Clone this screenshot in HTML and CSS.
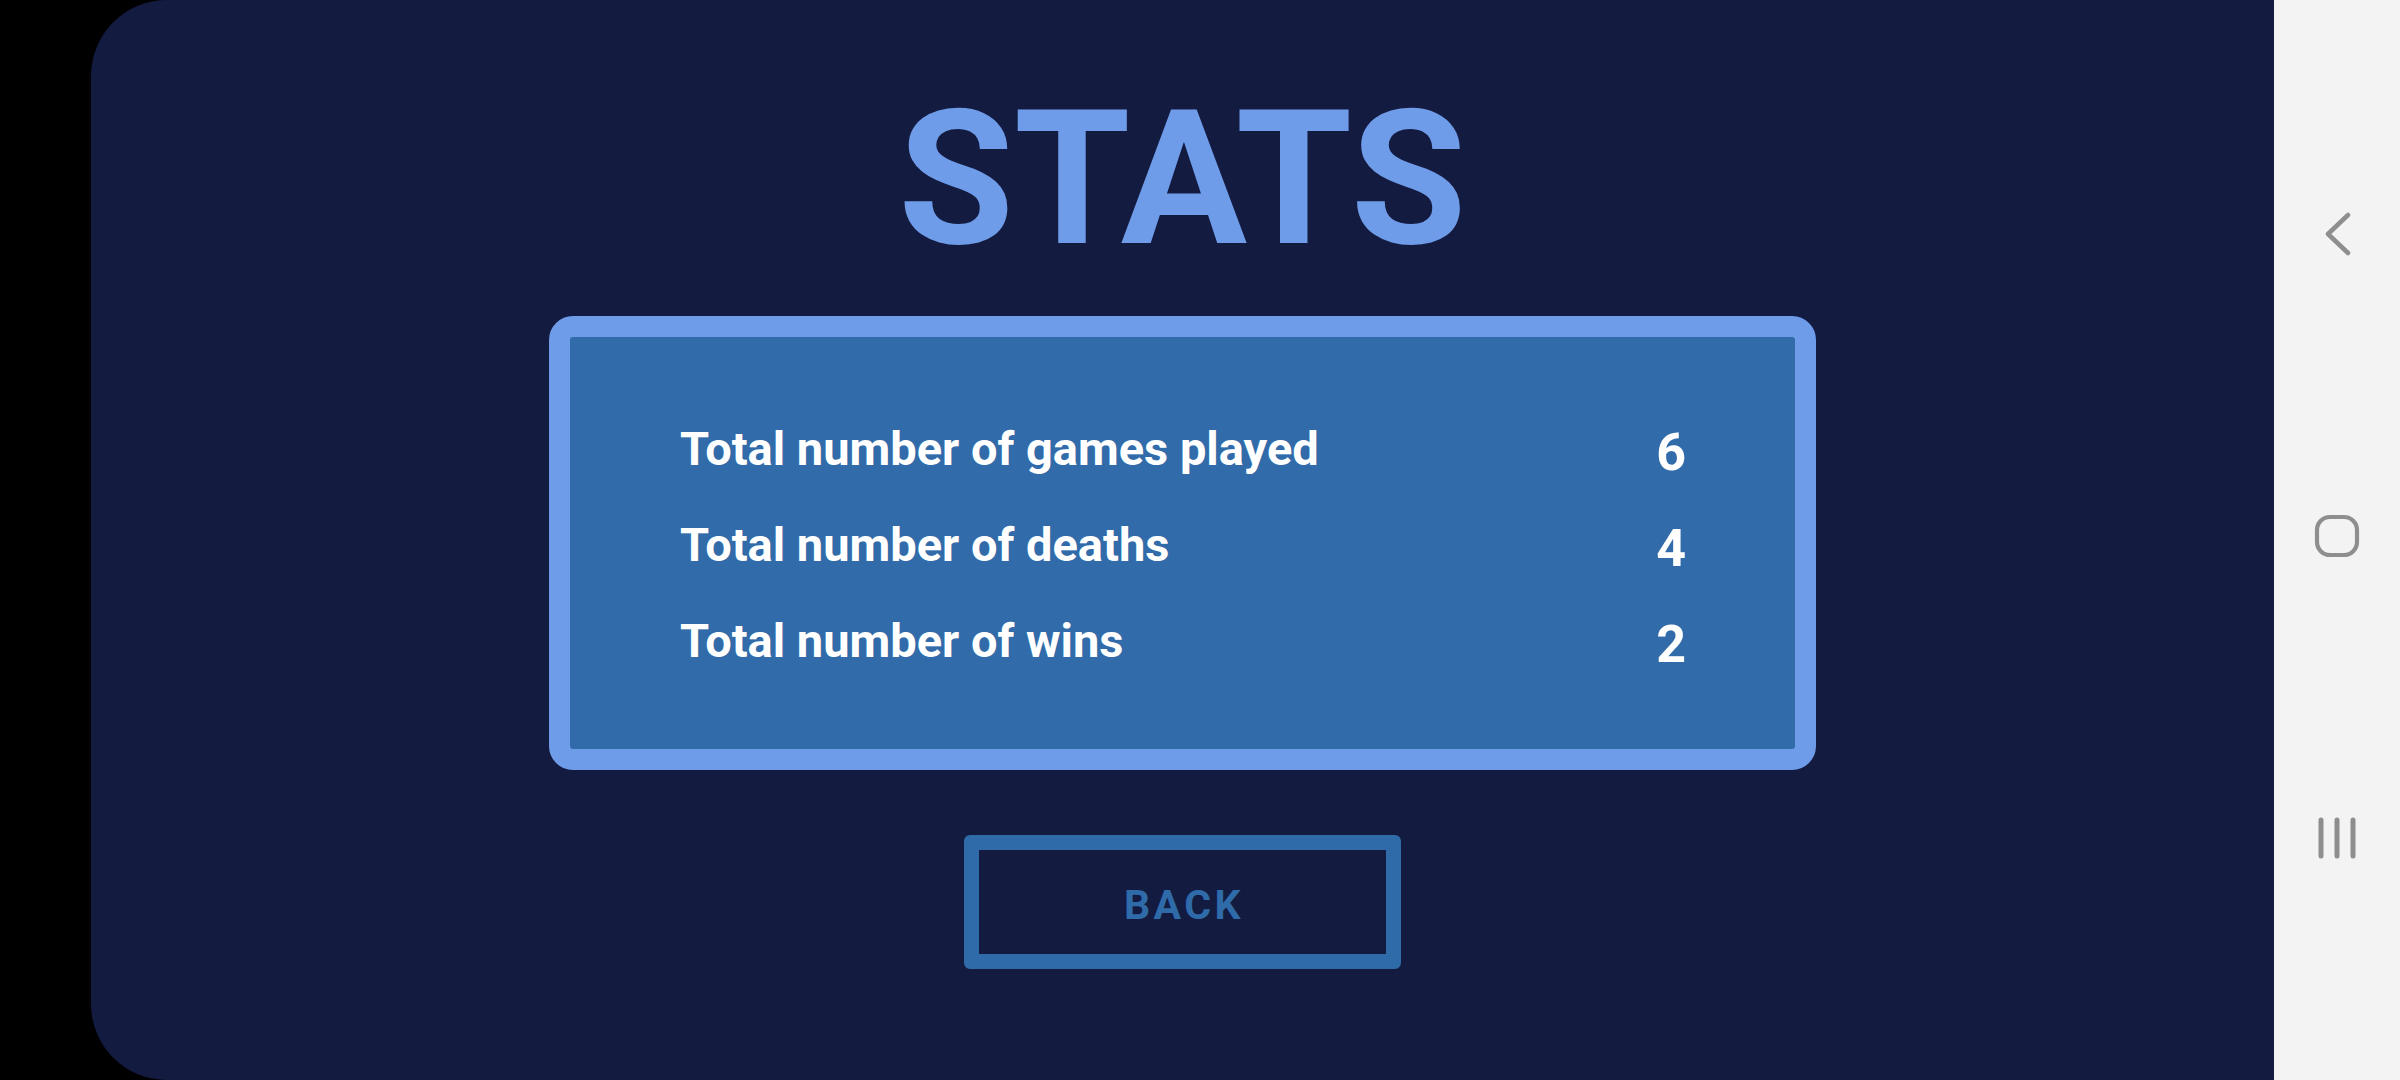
FILE: index.html
```html
<!DOCTYPE html>
<html lang="en">
<head>
<meta charset="utf-8">
<title>Stats</title>
<link rel="stylesheet" href="styles.css">
</head>
<body>
<div class="device">
  <main class="screen">
    <h1 class="title">STATS</h1>
    <section class="card">
      <div class="card-inner">
        <span class="label">Total number of games played</span><span class="value">6</span>
        <span class="label">Total number of deaths</span><span class="value">4</span>
        <span class="label">Total number of wins</span><span class="value">2</span>
      </div>
    </section>
    <button class="back" type="button">BACK</button>
  </main>
  <nav class="navbar">
    <span class="nav-btn">
      <svg width="40" height="60" viewBox="0 0 40 60"><path d="M31 11 L11 30 L31 49" fill="none" stroke="#8e8e8e" stroke-width="4.5" stroke-linecap="round" stroke-linejoin="round"/></svg>
    </span>
    <span class="nav-btn">
      <svg width="48" height="60" viewBox="0 0 48 60"><rect x="4" y="11" width="40" height="38" rx="13" ry="13" fill="none" stroke="#8e8e8e" stroke-width="4.2"/></svg>
    </span>
    <span class="nav-btn">
      <svg width="48" height="60" viewBox="0 0 48 60"><g stroke="#8e8e8e" stroke-width="5" stroke-linecap="round"><path d="M8 12 V48"/><path d="M24 12 V48"/><path d="M40 12 V48"/></g></svg>
    </span>
  </nav>
</div>
</body>
</html>
```
FILE: styles.css
```css
html, body {
  margin: 0;
  padding: 0;
  background: #000;
}
body {
  width: 2400px;
  height: 1080px;
  overflow: hidden;
  font-family: Roboto, "Liberation Sans", sans-serif;
}
.device {
  display: flex;
  height: 1080px;
  padding-left: 91px;
  box-sizing: border-box;
}
.screen {
  flex: 1;
  background: #131b40;
  border-radius: 76px 0 0 76px;
  display: flex;
  flex-direction: column;
  align-items: center;
  padding-top: 85px;
  box-sizing: border-box;
}
.title {
  margin: 0;
  font-size: 188px;
  line-height: 188px;
  font-weight: 700;
  color: #6f9ce9;
}
.card {
  margin-top: 43px;
  width: 1267px;
  box-sizing: border-box;
  border: 21px solid #6f9ce9;
  border-radius: 24px;
  background: #316ba9;
}
.card-inner {
  display: grid;
  grid-template-columns: 1fr auto;
  grid-auto-rows: 96px;
  padding: 64px 109px 60px 110px;
  color: #fff;
  font-weight: 700;
}
.label {
  font-size: 47px;
  line-height: 96px;
  white-space: nowrap;
}
.value {
  font-size: 52px;
  line-height: 104px;
  text-align: right;
}
.back {
  margin-top: 65px;
  width: 437px;
  height: 134px;
  box-sizing: border-box;
  border: 15px solid #2f6aa9;
  border-radius: 6px;
  background: transparent;
  color: #2f6aa9;
  font-family: Roboto, "Liberation Sans", sans-serif;
  font-weight: 700;
  font-size: 41px;
  letter-spacing: 3.5px;
  padding: 5px 0 0 3px;
}
.navbar {
  width: 126px;
  background: #f3f3f3;
  display: flex;
  flex-direction: column;
  align-items: center;
  justify-content: center;
  gap: 242px;
  padding-bottom: 9px;
  box-sizing: border-box;
}
.nav-btn {
  display: flex;
  height: 60px;
  align-items: center;
  justify-content: center;
}
.nav-btn svg {
  display: block;
}
```
